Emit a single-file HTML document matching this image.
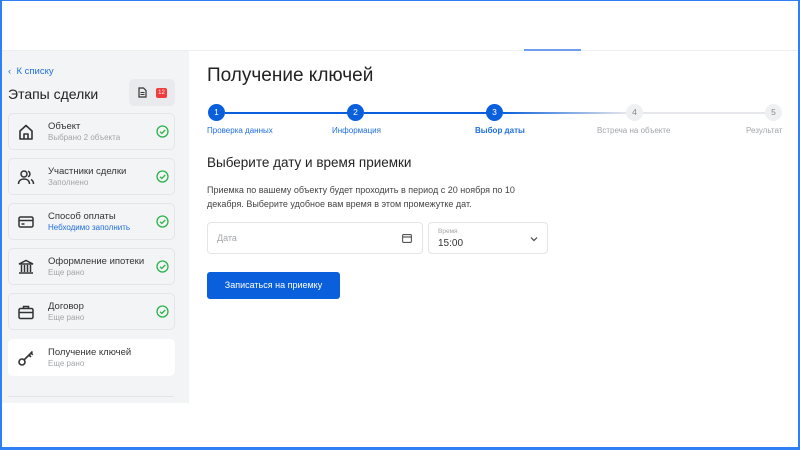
<!DOCTYPE html>
<html><head><meta charset="utf-8"><style>
*{box-sizing:border-box;margin:0;padding:0}
body{width:800px;height:450px;overflow:hidden;background:#fff;font-family:"Liberation Sans","Noto Sans CJK SC",sans-serif;position:relative;color:#222}
.frame{position:absolute;left:0;top:0;width:800px;height:450px;border:2px solid #2f80f5;border-top-width:1px;border-right-width:2px;border-bottom-width:3px;pointer-events:none;z-index:10}
.hline{position:absolute;left:0;top:50px;width:800px;height:1px;background:#eceef1}
.hblue{position:absolute;left:524px;top:49px;width:57px;height:2px;background:#6d9ef0}
.side{position:absolute;left:2px;top:51px;width:187px;height:352px;background:#f3f4f6}
.back{position:absolute;left:8px;top:66px;font-size:9.5px;color:#1f6fe0}
.stitle{position:absolute;left:8px;top:86px;font-size:14px;color:#222}
.docbtn{position:absolute;left:129px;top:79px;width:46px;height:27px;background:#e9eaed;border-radius:5px}
.badge{position:absolute;left:156px;top:88px;width:11px;height:10px;background:#f23b3b;border-radius:2px;color:#fff;font-size:6px;text-align:center;line-height:10px}
.card{position:absolute;left:8px;width:167px;height:37px;border:1px solid #e3e5e8;border-radius:5px;background:#f3f4f6}
.card.w{background:#fff;border-color:#fff}
.card .ic{position:absolute;left:8px;top:9px}
.card .t{position:absolute;left:39px;top:7px;font-size:9.5px;color:#333}
.card .s{position:absolute;left:39px;top:19px;font-size:8px;color:#a2a5aa}
.card .s.b{color:#1f6fe0}
.card .ok{position:absolute;left:147px;top:11px}
.divider{position:absolute;left:8px;top:396px;width:166px;height:1px;background:#e2e4e7}
h1{position:absolute;left:207px;top:65px;font-size:19px;font-weight:normal;color:#222}
.line{position:absolute;top:112px;height:2px}
.circ{position:absolute;top:104px;width:17px;height:17px;border-radius:50%;font-size:8.5px;text-align:center;line-height:17px}
.circ.a{background:#0a5fdc;color:#fff}
.circ.g{background:#eef0f2;color:#888}
.lbl{position:absolute;top:126px;font-size:8px}
h2{position:absolute;left:207px;top:155px;font-size:13.5px;font-weight:normal;color:#222}
.p{position:absolute;left:207px;top:184px;font-size:9px;line-height:13.5px;color:#444;width:325px}
.inp{position:absolute;top:222px;height:32px;border:1px solid #e3e5e8;border-radius:4px;background:#fff}
.btn{position:absolute;left:207px;top:272px;width:133px;height:27px;background:#0a5fdc;border-radius:3px;color:#fff;font-size:9px;text-align:center;line-height:27px}
</style></head><body>
<div class="hline"></div><div class="hblue"></div>
<div class="side"></div>
<div class="back">&#8249;&nbsp; К списку</div>
<div class="stitle">Этапы сделки</div>
<div class="docbtn"></div>
<svg style="position:absolute;left:138px;top:87px" width="9" height="11" viewBox="0 0 9 11"><path d="M1 1h4.5L8 3.5V10H1z" fill="none" stroke="#333" stroke-width="1.2"/><path d="M2.5 5.5h4M2.5 7.5h4" stroke="#333"/></svg>
<div class="badge">12</div>

<div class="card" style="top:113px"><svg class="ic" width="18" height="18" viewBox="0 0 18 18"><path d="M3 8L9 2.5 15 8v8H3z M7 16v-5h4v5" fill="none" stroke="#333" stroke-width="1.6" stroke-linejoin="round"/></svg><div class="t">Объект</div><div class="s">Выбрано 2 объекта</div><svg class="ok" width="13" height="13" viewBox="0 0 13 13"><circle cx="6.5" cy="6.5" r="5.5" fill="none" stroke="#2db34a" stroke-width="1.3"/><path d="M4 6.7l1.8 1.8L9.2 5" fill="none" stroke="#2db34a" stroke-width="1.3"/></svg></div>
<div class="card" style="top:158px"><svg class="ic" width="18" height="18" viewBox="0 0 18 18"><circle cx="7" cy="6" r="3" fill="none" stroke="#333" stroke-width="1.5"/><path d="M1.5 16c0-3.5 2.5-5 5.5-5s5.5 1.5 5.5 5M11 3.2a3 3 0 010 5.6M14 11.5c1.5.8 2.5 2.3 2.5 4.5" fill="none" stroke="#333" stroke-width="1.5"/></svg><div class="t">Участники сделки</div><div class="s">Заполнено</div><svg class="ok" width="13" height="13" viewBox="0 0 13 13"><circle cx="6.5" cy="6.5" r="5.5" fill="none" stroke="#2db34a" stroke-width="1.3"/><path d="M4 6.7l1.8 1.8L9.2 5" fill="none" stroke="#2db34a" stroke-width="1.3"/></svg></div>
<div class="card" style="top:203px"><svg class="ic" width="18" height="18" viewBox="0 0 18 18"><rect x="2" y="4" width="14" height="10" rx="1.5" fill="none" stroke="#333" stroke-width="1.5"/><path d="M2 7.5h14M4.5 11h3" stroke="#333" stroke-width="1.5"/></svg><div class="t">Способ оплаты</div><div class="s b">Небходимо заполнить</div><svg class="ok" width="13" height="13" viewBox="0 0 13 13"><circle cx="6.5" cy="6.5" r="5.5" fill="none" stroke="#2db34a" stroke-width="1.3"/><path d="M4 6.7l1.8 1.8L9.2 5" fill="none" stroke="#2db34a" stroke-width="1.3"/></svg></div>
<div class="card" style="top:248px"><svg class="ic" width="18" height="18" viewBox="0 0 18 18"><path d="M2 6L9 2.5 16 6z M3 6h12M4.5 7v7M7.5 7v7M10.5 7v7M13.5 7v7M2 15h14" fill="none" stroke="#333" stroke-width="1.5"/></svg><div class="t">Оформление ипотеки</div><div class="s">Еще рано</div><svg class="ok" width="13" height="13" viewBox="0 0 13 13"><circle cx="6.5" cy="6.5" r="5.5" fill="none" stroke="#2db34a" stroke-width="1.3"/><path d="M4 6.7l1.8 1.8L9.2 5" fill="none" stroke="#2db34a" stroke-width="1.3"/></svg></div>
<div class="card" style="top:293px"><svg class="ic" width="18" height="18" viewBox="0 0 18 18"><rect x="2" y="5.5" width="14" height="10" rx="1.5" fill="none" stroke="#333" stroke-width="1.5"/><path d="M6.5 5.5V3.5h5v2M2 9.5h14" fill="none" stroke="#333" stroke-width="1.5"/></svg><div class="t">Договор</div><div class="s">Еще рано</div><svg class="ok" width="13" height="13" viewBox="0 0 13 13"><circle cx="6.5" cy="6.5" r="5.5" fill="none" stroke="#2db34a" stroke-width="1.3"/><path d="M4 6.7l1.8 1.8L9.2 5" fill="none" stroke="#2db34a" stroke-width="1.3"/></svg></div>
<div class="card w" style="top:339px"><svg class="ic" width="18" height="18" viewBox="0 0 18 18"><circle cx="5" cy="13" r="3" fill="none" stroke="#333" stroke-width="1.6"/><path d="M7.2 10.8L15.5 2.5M12 6l2 2M14 4l1.8 1.8" fill="none" stroke="#333" stroke-width="1.6"/></svg><div class="t">Получение ключей</div><div class="s">Еще рано</div></div>
<div class="divider"></div>

<h1>Получение ключей</h1>
<div class="line" style="left:225px;width:123px;background:#0a5fdc"></div>
<div class="line" style="left:364px;width:123px;background:#0a5fdc"></div>
<div class="line" style="left:503px;width:124px;background:linear-gradient(90deg,#0a5fdc,#e6e8eb)"></div>
<div class="line" style="left:643px;width:123px;background:#e6e8eb"></div>
<div class="circ a" style="left:208px">1</div>
<div class="circ a" style="left:347px">2</div>
<div class="circ a" style="left:486px">3</div>
<div class="circ g" style="left:626px">4</div>
<div class="circ g" style="left:765px">5</div>
<div class="lbl" style="left:207px;color:#1f6fe0">Проверка данных</div>
<div class="lbl" style="left:332px;color:#1f6fe0">Информация</div>
<div class="lbl" style="left:475px;color:#1f6fe0;font-weight:bold">Выбор даты</div>
<div class="lbl" style="left:597px;color:#a2a5aa">Встреча на объекте</div>
<div class="lbl" style="left:746px;color:#a2a5aa">Результат</div>

<h2>Выберите дату и время приемки</h2>
<div class="p">Приемка по вашему объекту будет проходить в период с 20 ноября по 10 декабря. Выберите удобное вам время в этом промежутке дат.</div>
<div class="inp" style="left:207px;width:216px"><span style="position:absolute;left:9px;top:10px;font-size:9px;color:#a2a5aa">Дата</span><svg style="position:absolute;left:194px;top:11px" width="10" height="9" viewBox="0 0 10 9"><rect x="0.6" y="0.6" width="8.8" height="7.8" rx="1" fill="none" stroke="#555" stroke-width="1.1"/><path d="M0.6 3h8.8" stroke="#555" stroke-width="1.2"/></svg></div>
<div class="inp" style="left:428px;width:120px"><span style="position:absolute;left:9px;top:5px;font-size:6.5px;color:#a2a5aa">Время</span><span style="position:absolute;left:9px;top:15px;font-size:10px;color:#333">15:00</span><svg style="position:absolute;left:101px;top:13px" width="8" height="6" viewBox="0 0 8 6"><path d="M1 1.5l3 3 3-3" fill="none" stroke="#444" stroke-width="1.2"/></svg></div>
<div class="btn">Записаться на приемку</div>
<div class="frame"></div>
</body></html>
